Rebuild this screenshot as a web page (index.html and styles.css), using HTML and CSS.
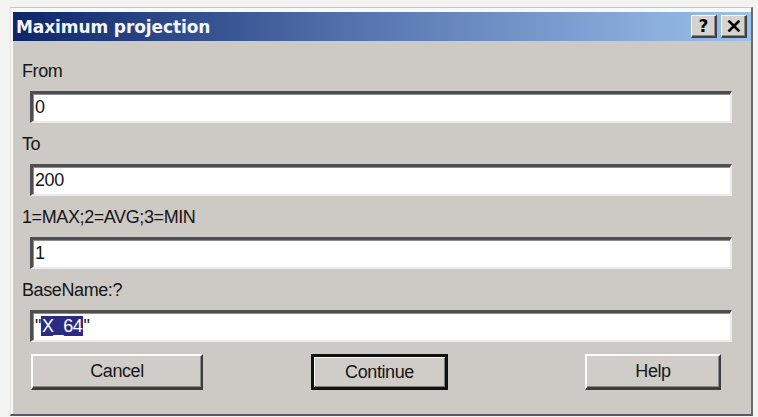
FILE: index.html
```html
<!DOCTYPE html>
<html lang="en">
<head>
<meta charset="utf-8">
<title>Maximum projection</title>
<link rel="stylesheet" href="styles.css">
</head>
<body>
<div class="window">
  <div class="titlebar">
    <span class="title">Maximum projection</span>
    <div class="caption-buttons">
      <span class="cap-btn help-btn">?</span>
      <span class="cap-btn close-btn">
        <svg width="14" height="12" viewBox="0 0 14 12" aria-hidden="true">
          <path d="M1.5 0.5 L12.5 11.5 M12.5 0.5 L1.5 11.5" stroke="#000" stroke-width="2.6" fill="none"/>
        </svg>
      </span>
    </div>
  </div>
  <div class="client">
    <div class="field">
      <label class="field-label">From</label>
      <div class="edit"><span>0</span></div>
    </div>
    <div class="field">
      <label class="field-label">To</label>
      <div class="edit"><span>200</span></div>
    </div>
    <div class="field">
      <label class="field-label">1=MAX;2=AVG;3=MIN</label>
      <div class="edit"><span>1</span></div>
    </div>
    <div class="field">
      <label class="field-label">BaseName:?</label>
      <div class="edit"><span>"<span class="sel">X_64</span>"</span></div>
    </div>
    <div class="buttons">
      <button class="btn btn-cancel">Cancel</button>
      <button class="btn btn-default btn-continue">Continue</button>
      <button class="btn btn-help">Help</button>
    </div>
  </div>
</div>
</body>
</html>
```

FILE: styles.css
```css
html, body {
  margin: 0;
  padding: 0;
}

body {
  background: #f3f4f2;
  width: 758px;
  height: 417px;
  overflow: hidden;
  font-family: "Liberation Sans", Arial, sans-serif;
}

/* outer window frame: light top/left, dark bottom/right */
.window {
  margin: 7px 0 0 10px;
  width: 743px;
  height: 409px;
  box-sizing: border-box;
  border-top: 1px solid #c4c5c1;
  border-left: 1px solid #e2e3e0;
  border-right: 2px solid #6a6a6a;
  border-bottom: 2px solid #5a5a5a;
  background: #f8f8f6;
  padding: 4px 0 0 2px;
  display: flex;
  flex-direction: column;
}

.titlebar {
  height: 29px;
  flex: none;
  background: linear-gradient(to right, #0c2669 0%, #5a79b3 50%, #9cc1ec 100%);
  display: flex;
  align-items: center;
  justify-content: space-between;
  padding: 0 4px 0 3px;
}

.title {
  color: #f4f6fb;
  font-family: "DejaVu Sans", Verdana, sans-serif;
  font-weight: bold;
  font-size: 17px;
  letter-spacing: -0.1px;
}

.caption-buttons {
  display: flex;
  gap: 4px;
}

.cap-btn {
  width: 26px;
  height: 23px;
  box-sizing: border-box;
  background: #d6d3ce;
  border-top: 1px solid #ffffff;
  border-left: 1px solid #ffffff;
  border-right: 2px solid #404040;
  border-bottom: 2px solid #404040;
  box-shadow: inset -1px -1px 0 #8a8a8a;
  display: flex;
  align-items: center;
  justify-content: center;
}

.help-btn {
  font-family: "DejaVu Sans", sans-serif;
  font-weight: bold;
  font-size: 17px;
  color: #000;
  line-height: 1;
}

.client {
  flex: 1;
  background: #cdcac5;
  padding: 20px 19px 0 9px;
  display: flex;
  flex-direction: column;
}

.field {
  display: flex;
  flex-direction: column;
  margin-bottom: 11px;
}

.field-label {
  font-size: 18px;
  line-height: 20px;
  color: #161616;
  margin-bottom: 10px;
  letter-spacing: -0.4px;
}

/* sunken edit box */
.edit {
  margin-left: 8px;
  height: 32px;
  box-sizing: border-box;
  background: #fff;
  border-top: 3px solid #4e4e4e;
  border-left: 3px solid #4e4e4e;
  border-right: 2px solid #ecebe8;
  border-bottom: 2px solid #ecebe8;
  box-shadow: inset 1px 1px 0 #8d8d8d;
  display: flex;
  align-items: center;
  padding-left: 2px;
  font-size: 18px;
  color: #161616;
  letter-spacing: -0.4px;
}

.sel {
  background: #2b2b86;
  color: #fff;
  padding: 0 1px;
  line-height: 20px;
  display: inline-block;
}

.buttons {
  display: flex;
  margin-top: 1px;
  margin-left: 9px;
}

.btn {
  height: 36px;
  box-sizing: border-box;
  background: #d0cdc8;
  font-family: "Liberation Sans", Arial, sans-serif;
  font-size: 18px;
  color: #161616;
  letter-spacing: -0.4px;
  padding: 0;
  border-top: 2px solid #fbfbfa;
  border-left: 2px solid #fbfbfa;
  border-right: 2px solid #3c3c3c;
  border-bottom: 3px solid #3c3c3c;
  box-shadow: inset -1px -1px 0 #8a8a8a;
}

.btn-cancel {
  width: 172px;
}

.btn-continue {
  width: 137px;
  margin-left: 108px;
}

.btn-help {
  width: 136px;
  margin-left: 137px;
}

/* default push button: extra black outline */
.btn-default {
  border: 3px solid #111;
  box-shadow: inset 1px 1px 0 #fbfbfa, inset -1px -1px 0 #7a7a7a;
}
```
